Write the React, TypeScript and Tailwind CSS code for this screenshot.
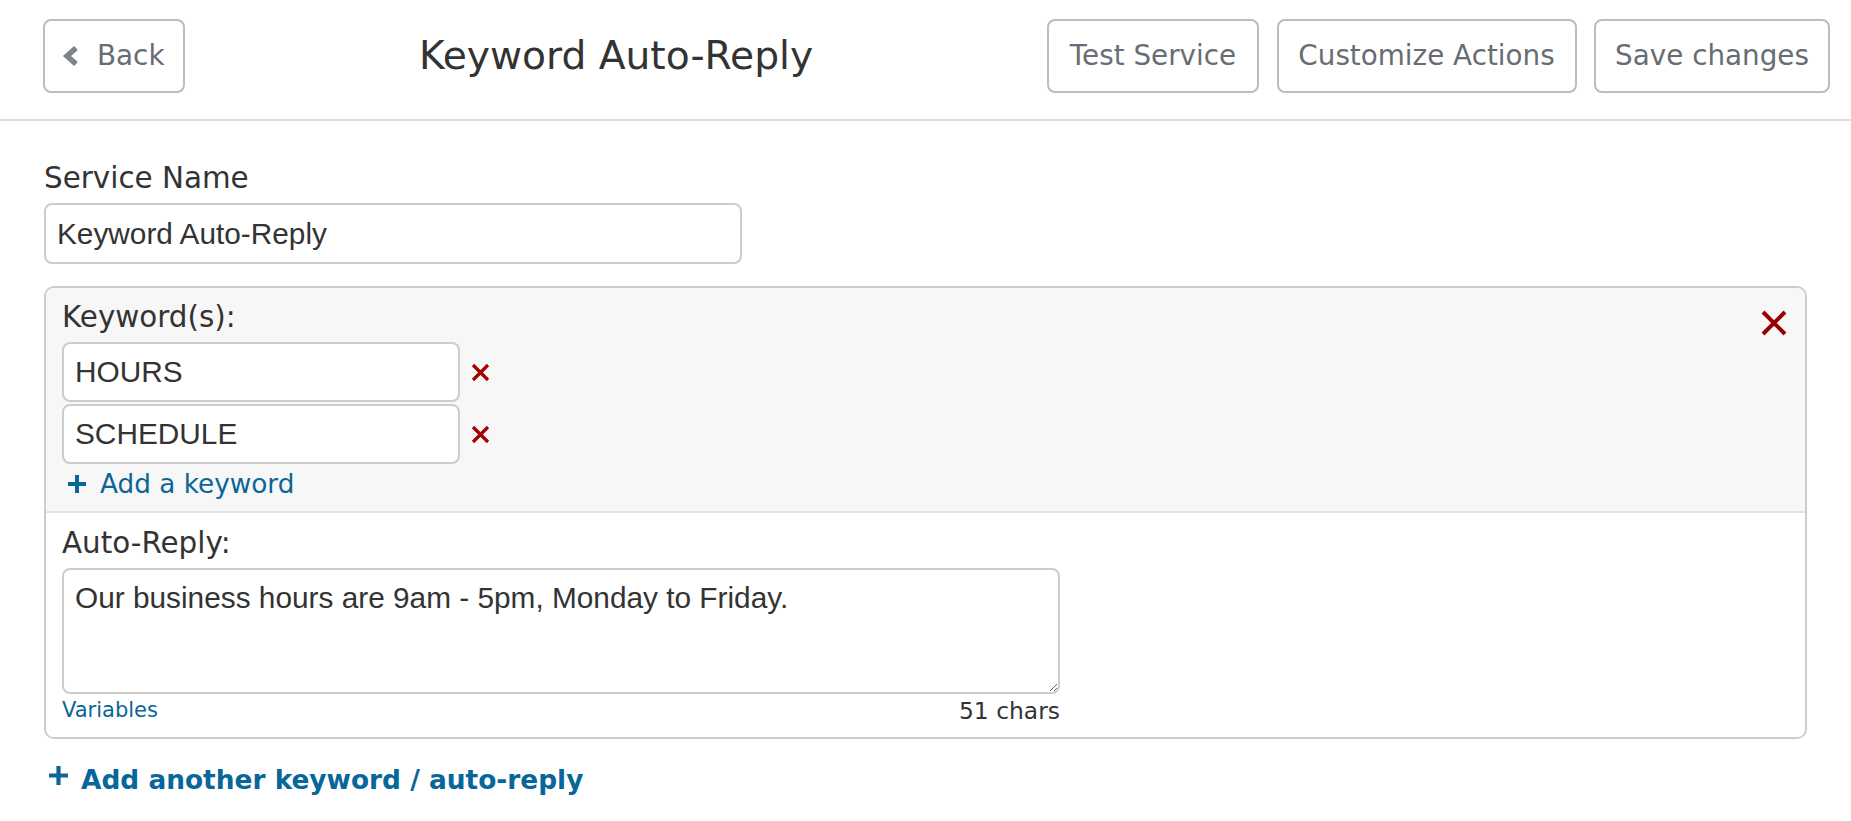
import React from 'react';

function Chevron() {
  return (
    <svg width="18" height="20" viewBox="0 0 18 20" className="shrink-0">
      <path d="M14 2 L5 10 L14 18" fill="none" stroke="#7e8588" strokeWidth="5.5" strokeLinejoin="miter" />
    </svg>
  );
}

function SmallX() {
  return (
    <svg width="19" height="19" viewBox="0 0 19 19" className="shrink-0">
      <path d="M2 2 L17 17 M17 2 L2 17" stroke="#a30000" strokeWidth="3.2" />
    </svg>
  );
}

function BigX() {
  return (
    <svg width="26" height="26" viewBox="0 0 26 26" className="shrink-0">
      <path d="M2 2 L24 24 M24 2 L2 24" stroke="#990000" strokeWidth="4" />
    </svg>
  );
}

function Plus({ size = 20 }: { size?: number }) {
  return (
    <svg width={size} height={size} viewBox="0 0 20 20" className="shrink-0">
      <path d="M10 1 V19 M1 10 H19" stroke="#0a6696" strokeWidth="4" />
    </svg>
  );
}

const headerBtn =
  'h-[74px] border-2 border-[#bdbdbd] rounded-[8px] bg-white text-[27.8px] text-[#676d72] flex items-center justify-center';

const inputBase =
  "border-2 border-[#cccccc] rounded-[8px] bg-white px-[11px] text-[29.8px] text-[#333] font-['Liberation_Sans',Arial,sans-serif] outline-none";

export default function App() {
  return (
    <div className="min-h-screen bg-white font-['DejaVu_Sans',Verdana,sans-serif] text-[#333]">
      <header className="flex items-start h-[121px] pt-[19px] pl-[43px] pr-[21px] border-b-2 border-[#dedede]">
        <button className={`${headerBtn} w-[142px] !justify-start pl-[17px] gap-[17px]`}>
          <Chevron />
          <span>Back</span>
        </button>
        <h1 className="flex-1 text-center text-[39.2px] leading-[74px] text-[#333]">Keyword Auto-Reply</h1>
        <div className="flex gap-[17.5px]">
          <button className={`${headerBtn} w-[212px]`}>Test Service</button>
          <button className={`${headerBtn} w-[300px]`}>Customize Actions</button>
          <button className={`${headerBtn} w-[236px]`}>Save changes</button>
        </div>
      </header>

      <main className="px-[44px] pt-[40px]">
        <label className="block text-[29.4px] leading-[34px]">Service Name</label>
        <input readOnly value="Keyword Auto-Reply" className={`${inputBase} block mt-[8px] w-[698px] h-[61px]`} />

        <div className="mt-[22px] border-2 border-[#cccccc] rounded-[10px] overflow-hidden">
          <div className="flex bg-[#f7f7f7] pl-[16px] pr-[18px] pt-[12px] pb-[12px] border-b-2 border-[#e2e2e2]">
            <div className="flex-1">
              <div className="text-[29.4px] leading-[34px]">Keyword(s):</div>
              <div className="mt-[8px] flex flex-col gap-[2px]">
                {['HOURS', 'SCHEDULE'].map((k) => (
                  <div key={k} className="flex items-center gap-[11px]">
                    <input readOnly value={k} className={`${inputBase} w-[398px] h-[60px]`} />
                    <SmallX />
                  </div>
                ))}
              </div>
              <div className="mt-[5px] flex items-center pl-[5px] gap-[13px] text-[26.3px] leading-[30px] text-[#0a6696]">
                <Plus />
                <span>Add a keyword</span>
              </div>
            </div>
            <div className="mt-[10px]">
              <BigX />
            </div>
          </div>

          <div className="bg-white pl-[16px] pt-[13px] pb-[12px]">
            <div className="text-[29.4px] leading-[34px]">Auto-Reply:</div>
            <textarea
              readOnly
              defaultValue="Our business hours are 9am - 5pm, Monday to Friday."
              className={`${inputBase} block mt-[8px] w-[998px] h-[126px] pt-[11px] leading-[34px] resize`}
            />
            <div className="mt-[4px] w-[998px] flex justify-between items-start">
              <span className="text-[21px] leading-[24px] text-[#0a6696]">Variables</span>
              <span className="text-[23.4px] leading-[27px] text-[#333]">51 chars</span>
            </div>
          </div>
        </div>

        <div className="mt-[26px] flex items-start pl-[4px] gap-[12px] text-[26.4px] leading-[30px] font-bold text-[#07669a]">
          <Plus size={21} />
          <span>Add another keyword / auto-reply</span>
        </div>
      </main>
    </div>
  );
}
